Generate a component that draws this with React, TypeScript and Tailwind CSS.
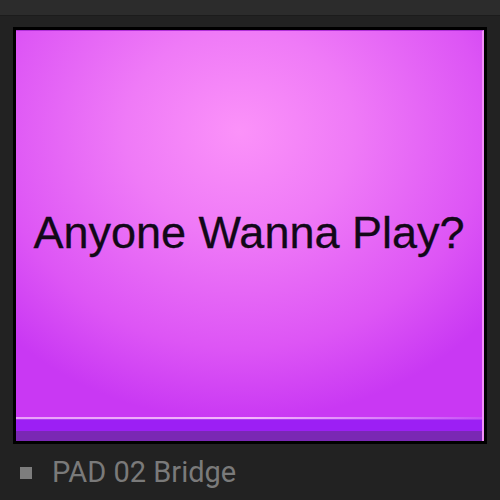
export default function App() {
  return (
    <div className="w-[500px] h-[500px] bg-[#222222] overflow-hidden flex flex-col">
      {/* top bar */}
      <div className="h-[16px] bg-[#2c2c2c] border-b border-[#1c1c1c]" />

      {/* pad tile */}
      <div className="ml-[13px] mt-[11px] w-[474px] h-[417px] border-[3px] border-black bg-black flex flex-col">
        <div className="flex-1 flex flex-col border-t border-[#b030d8] border-r-2 border-r-[#f290f8]">
          <div className="flex-1 flex items-center justify-center pt-[16px] bg-[radial-gradient(ellipse_70%_75%_at_48%_26%,#fb92f9_0%,#ef7af7_35%,#dd55f5_75%,#c938f3_100%)]">
            <span className="text-[45px] leading-none text-[#120818] font-['Liberation_Sans',Arial,sans-serif] [-webkit-text-stroke:0.3px_#120818]">
              Anyone Wanna Play?
            </span>
          </div>
          <div className="h-[2px] bg-gradient-to-r from-[#e9a0f9] via-[#f4b8fb] to-[#c84ff5]" />
          <div className="h-[1px] bg-[#b03cf4]" />
          <div className="h-[11px] bg-[#9c1ff4]" />
          <div className="h-[10px] bg-[#7a28b4]" />
        </div>
      </div>

      {/* label */}
      <div className="flex items-center mt-[14px] pl-[20px]">
        <div className="w-[12px] h-[12px] bg-[#7d7d7d]" />
        <span className="ml-[20px] text-[29px] leading-none text-[#7a7a7a] font-['Roboto',sans-serif]">
          PAD 02 Bridge
        </span>
      </div>
    </div>
  )
}
